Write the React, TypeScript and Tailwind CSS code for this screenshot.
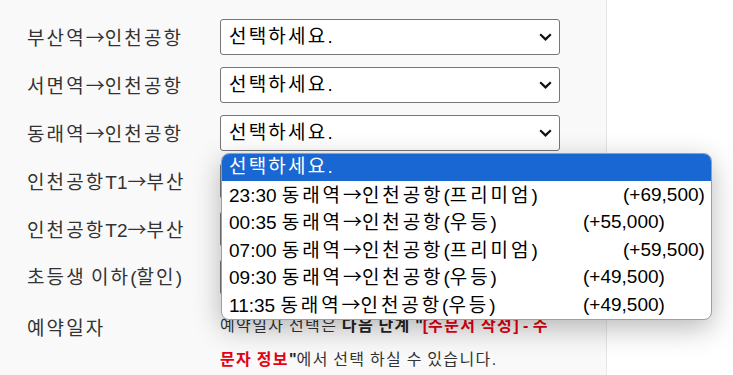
import React from "react";

const font = "font-['Liberation_Sans','Noto_Sans_CJK_KR',sans-serif]";

const rows = [
  "부산역→인천공항",
  "서면역→인천공항",
  "동래역→인천공항",
  "인천공항T1→부산",
  "인천공항T2→부산",
  "초등생 이하(할인)",
];

const options = [
  { text: "23:30 동래역→인천공항(프리미엄)", price: "(+69,500)", premium: true },
  { text: "00:35 동래역→인천공항(우등)", price: "(+55,000)", premium: false },
  { text: "07:00 동래역→인천공항(프리미엄)", price: "(+59,500)", premium: true },
  { text: "09:30 동래역→인천공항(우등)", price: "(+49,500)", premium: false },
  { text: "11:35 동래역→인천공항(우등)", price: "(+49,500)", premium: false },
];

// hangul in the reference sits wider than the latin digits, so only the
// hangul runs get letter spacing; the arrow uses the CJK face
const K: React.FC<{ text: string; track: string }> = ({ text, track }) => (
  <>
    {text.split(/([가-힣]+|→)/).map((part, i) => {
      if (part === "→")
        return (
          <span key={i} className="font-['Noto_Sans_CJK_KR']">
            →
          </span>
        );
      if (/[가-힣]/.test(part))
        return (
          <span key={i} className={track}>
            {part}
          </span>
        );
      return part;
    })}
  </>
);

const Chevron = () => (
  <svg width="13" height="8" viewBox="0 0 13 8" className="shrink-0">
    <path d="M1.2 1.2 L6.5 6.4 L11.8 1.2" fill="none" stroke="#111" strokeWidth="2.2" />
  </svg>
);

const FakeSelect: React.FC = () => (
  <div className="flex h-9 w-[340px] items-center justify-between rounded-[3px] border border-[#767676] bg-white pl-2 pr-[7px] text-[19px] text-black">
    <span className="tracking-[2.2px]">선택하세요.</span>
    <Chevron />
  </div>
);

const App: React.FC = () => {
  return (
    <div className={`relative flex h-[375px] w-[733px] overflow-hidden bg-white ${font}`}>
      <div className="w-[607px] shrink-0 border-r border-[#e6e6e6] bg-[#f9f9f9] pt-[19px]">
        <div className="flex flex-col gap-3">
          {rows.map((label) => (
            <div key={label} className="flex h-9 items-center">
              <div className="w-[220px] pl-[27px] pt-[2px] text-[19px] text-[#333]">
                <K text={label} track="tracking-[2.1px]" />
              </div>
              <FakeSelect />
            </div>
          ))}
          <div className="flex items-start">
            <div className="w-[220px] pl-[27px] pt-[8px] text-[19px] tracking-[2.1px] text-[#333]">예약일자</div>
            <p className="mt-[2px] w-[342px] text-[16px] leading-[34px] text-[#333]">
              <K text="예약일자 선택은 " track="tracking-[1.4px]" />
              <b className="text-[#222]">
                <K text="다음 단계" track="tracking-[1.4px]" />
              </b>{" "}
              <b className="text-[#222]">
                "
                <span className="text-[#e60012]">
                  <K text="[주문서 작성] - 주문자 정보" track="tracking-[1.4px]" />
                </span>
                "
              </b>
              <K text="에서 선택 하실 수 있습니다." track="tracking-[1.4px]" />
            </p>
          </div>
        </div>
      </div>

      <div className="absolute left-[221px] top-[153px] w-[491px] overflow-hidden rounded-lg border border-[#9e9e9e] bg-white text-[19px] text-black shadow-[0_8px_28px_rgba(0,0,0,0.28)]">
        <div className="flex h-[27px] items-center bg-[#1967d2] pl-[7px] text-white">
          <span className="tracking-[2.2px]">선택하세요.</span>
        </div>
        {options.map((o) => (
          <div key={o.text} className="flex h-[27.6px] items-center pl-[7px]">
            <span className={o.premium ? "w-[394px] shrink-0" : "w-[354px] shrink-0"}>
              <K text={o.text} track="tracking-[2.9px]" />
            </span>
            <span>{o.price}</span>
          </div>
        ))}
      </div>
    </div>
  );
};

export default App;
